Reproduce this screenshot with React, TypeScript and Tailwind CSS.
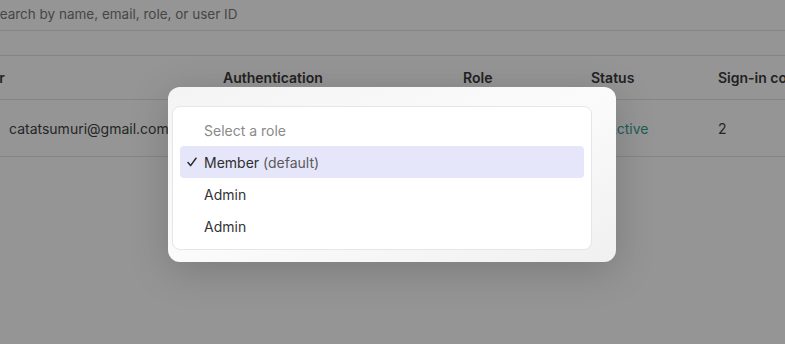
import React from "react";

export default function App() {
  return (
    <div
      className="relative w-[785px] h-[344px] overflow-hidden bg-[#959595] text-[14px] text-[#262626]"
      style={{ fontFamily: "Inter, 'Noto Sans', sans-serif" }}
    >
      {/* search row */}
      <div className="h-[31px] border-b border-[#858585] flex items-center text-[#464646] text-[13.5px] pb-[1px]">
        <span className="-ml-[9px] whitespace-nowrap">Search by name, email, role, or user ID</span>
      </div>
      <div className="h-[25px] border-b border-[#858585]" />
      {/* header */}
      <div className="h-[44px] border-b border-[#858585] flex items-center font-semibold text-[#222] whitespace-nowrap">
        <div className="w-[223px] shrink-0">
          <span className="-ml-[27px]">User</span>
        </div>
        <div className="w-[240px] shrink-0">Authentication</div>
        <div className="w-[128px] shrink-0">Role</div>
        <div className="w-[127px] shrink-0">Status</div>
        <div className="shrink-0">Sign-in count</div>
      </div>
      {/* data row */}
      <div className="h-[57px] border-b border-[#858585] flex items-center whitespace-nowrap">
        <div className="w-[223px] shrink-0 pl-[9px]">catatsumuri@gmail.com</div>
        <div className="w-[240px] shrink-0"></div>
        <div className="w-[128px] shrink-0"></div>
        <div className="w-[127px] shrink-0 text-[#1c5d58] pl-[16px]">Active</div>
        <div className="shrink-0">2</div>
      </div>

      {/* popup */}
      <div className="absolute left-[168px] top-[87px] w-[448px] h-[175px] rounded-[12px] bg-gradient-to-br from-[#f4f4f4] via-[#fbfbfb] to-[#f0f0f0] shadow-[0_8px_40px_rgba(0,0,0,0.18)] pl-[4px] pt-[19px]">
        <div className="w-[420px] h-[144px] bg-white rounded-[8px] border border-[#e6e6e6] p-[7px]">
          <div className="h-[32px] flex items-center pl-[24px] text-[#8a8a8a]">Select a role</div>
          <div className="relative h-[32px] flex items-center pl-[24px] rounded-[4px] bg-[#e6e6fa] text-[#2e2e2e]">
            <svg
              className="absolute left-[7px] top-[11px]"
              width="10"
              height="10"
              viewBox="0 0 10 10"
              fill="none"
            >
              <path d="M1 5.6 L3.6 8.6 L9 1.2" stroke="#2a2a2a" strokeWidth="1.5" strokeLinecap="round" strokeLinejoin="round" />
            </svg>
            <span>Member</span>
            <span className="ml-[4px] text-[#5a5a5a]">(default)</span>
          </div>
          <div className="h-[32px] flex items-center pl-[24px] text-[#333]">Admin</div>
          <div className="h-[32px] flex items-center pl-[24px] text-[#333]">Admin</div>
        </div>
      </div>
    </div>
  );
}
